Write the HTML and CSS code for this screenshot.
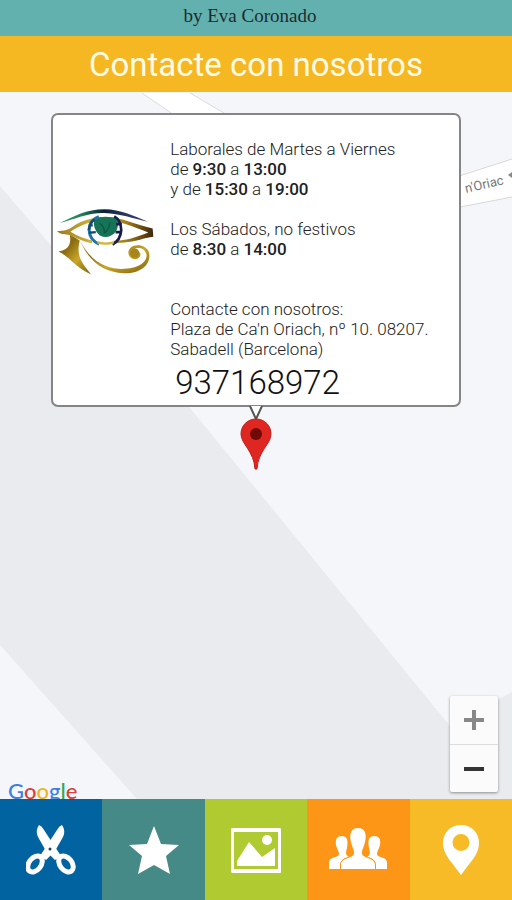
FILE: index.html
```html
<!DOCTYPE html>
<html lang="es">
<head>
<meta charset="utf-8">
<meta name="viewport" content="width=device-width, initial-scale=1">
<title>Contacte con nosotros</title>
<link rel="stylesheet" href="styles.css">
</head>
<body>
<header class="brand">by Eva Coronado</header>
<h1 class="title">Contacte con nosotros</h1>

<main class="map">
  <svg class="map-ground" viewBox="0 0 512 707" preserveAspectRatio="xMidYMid slice" aria-hidden="true">
    <rect width="512" height="707" fill="#f5f6fa"/>
    <path d="M0 94 L190 316 L450 634 L512 600 V707 H137 L0 553 Z" fill="#eaebef"/>
    <path d="M142 1 L190 34 H246 L190 1 Z" fill="#fff"/>
    <path d="M142 1 L190 34 M190 1 L246 34" stroke="#dcdce0" fill="none"/>
    <path d="M450 87 L512 67 V105 L450 117 Z" fill="#fff"/>
    <path d="M450 87 L512 67 M450 117 L512 105" stroke="#d8d8dc" fill="none"/>
    <text class="street" transform="translate(466 101) rotate(-13)">n'Oriac</text>
    <path d="M508 83 L512 80 V86 Z" fill="#888"/>
  </svg>

  <section class="place">
    <article class="card">
      <svg class="eye" viewBox="48 56 290 196" role="img" aria-label="Ojo">
        <defs>
          <linearGradient id="gold" x1="0" y1="0" x2="1" y2="1">
            <stop offset="0" stop-color="#b9951e"/><stop offset=".3" stop-color="#8a6a10"/>
            <stop offset=".6" stop-color="#c7a629"/><stop offset="1" stop-color="#80600c"/>
          </linearGradient>
          <linearGradient id="brow" x1="0" x2="1">
            <stop offset="0" stop-color="#36a060"/><stop offset=".25" stop-color="#1e805c"/>
            <stop offset=".5" stop-color="#0c2038"/><stop offset=".75" stop-color="#29365f"/><stop offset="1" stop-color="#3b437b"/>
          </linearGradient>
          <linearGradient id="lid" gradientUnits="userSpaceOnUse" x1="48" y1="0" x2="338" y2="0">
            <stop offset="0" stop-color="#9c7914"/><stop offset=".35" stop-color="#ceb13c"/>
            <stop offset=".7" stop-color="#a78219"/><stop offset="1" stop-color="#3d240d"/>
          </linearGradient>
        </defs>
        <path d="M56 98 C100 78 135 57 190 57 C239 57 275 77 321 94 C273 84 238 70 190 68 C137 67 105 86 56 98 Z" fill="url(#brow)"/>
        <path d="M48 122 C70 122 83 119 98 107 C126 88 158 80 195 80 C246 81 278 103 334 114 L336 139 C307 142 281 157 218 158 L217 151 C268 149 290 137 321 126 C275 111 238 91 196 90 C153 90 117 105 88 124 C111 137 128 144 153 150 L153 159 C125 153 110 145 86 134 C73 131 58 134 48 122 Z" fill="url(#lid)"/>
        <path d="M86 132 C91 161 84 178 52 183 C83 196 102 230 150 252 C128 222 103 202 116 150 Z" fill="url(#gold)"/>
        <path d="M116 148 C150 220 205 237 250 235 C303 232 320 207 315 190 C310 171 287 168 275 178 C268 184 272 195 281 193 C289 192 286 185 293 184 C304 191 294 207 281 206 C263 205 256 186 266 174 C280 157 317 163 323 186 C331 220 299 250 248 248 C185 245 143 213 116 148 Z" fill="url(#gold)"/>
        <circle cx="280" cy="188" r="14" fill="#a7841c"/>
        <path d="M159 84 Q193 75 228 84 Q237 124 207 137 Q193 143 176 135 Q154 119 159 84 Z" fill="#167355"/>
        <path d="M176 99 Q190 107 190 128 Q201 123 206 97" stroke="#0b5948" stroke-width="4" fill="none"/>
        <path d="M173 79 Q145 88 144 119 Q145 149 174 161" stroke="#1d75a6" stroke-width="9" fill="none"/>
        <path d="M160 86 Q145 99 143 119 M143 105 H155 M144 127 L164 125" stroke="#174977" stroke-width="7" fill="none"/>
        <path d="M219 78 Q239 89 240 119 Q238 149 214 162 M225 101 H242 M223 125 H242" stroke="#171b49" stroke-width="8" fill="none"/>
        <path d="M169 156 Q194 163 218 156" stroke="#d0b63e" stroke-width="7" fill="none"/>
      </svg>
      <div class="details">
        <p>Laborales de Martes a Viernes<br>de <b>9:30</b> a <b>13:00</b><br>y de <b>15:30</b> a <b>19:00</b></p>
        <p>Los Sábados, no festivos<br>de <b>8:30</b> a <b>14:00</b></p>
        <address>Contacte con nosotros:<br>Plaza de Ca'n Oriach, nº 10. 08207.<br>Sabadell (Barcelona)</address>
        <a class="phone" href="tel:937168972">937168972</a>
      </div>
    </article>
    <svg class="marker" viewBox="0 0 32 64" aria-hidden="true">
      <path d="M10 0 L16 13 L22 0" fill="#fff" stroke="#555" stroke-width="2"/>
      <path d="M16 13 C7 13 1 20 1 28 C1 38 14 45 15 63 H17 C18 45 31 38 31 28 C31 20 25 13 16 13 Z" fill="#e02620" stroke="#bd211c"/>
      <circle cx="16" cy="28" r="6" fill="#6f0a09"/>
    </svg>
  </section>

  <div class="zoom">
    <button type="button" aria-label="Acercar"><svg viewBox="0 0 22 22"><path d="M11 1 V21 M1 11 H21" stroke="#888" stroke-width="4"/></svg></button>
    <button type="button" aria-label="Alejar"><svg viewBox="0 0 22 22"><path d="M1 11 H21" stroke="#333" stroke-width="4"/></svg></button>
  </div>
  <div class="google"><span class="blue">G</span><span class="red">o</span><span class="yellow">o</span><span class="blue">g</span><span class="green">l</span><span class="red">e</span></div>
</main>

<nav class="tabs">
  <a class="tab services" href="#servicios" aria-label="Servicios">
    <svg viewBox="0 0 50 50">
      <path d="M13 0 Q16 1 18 5 L35 31 L29 35 L20 26 L12 12 Q9 6 13 0 Z" fill="#fff"/>
      <path d="M36 0 Q33 1 31 5 L14 31 L20 35 L29 26 L37 12 Q40 6 36 0 Z" fill="#fff"/>
      <ellipse cx="9" cy="39" rx="6" ry="9" transform="rotate(38 9 39)" fill="none" stroke="#fff" stroke-width="5"/>
      <ellipse cx="40" cy="39" rx="6" ry="9" transform="rotate(-38 40 39)" fill="none" stroke="#fff" stroke-width="5"/>
      <circle cx="24" cy="24" r="1.5" fill="#263f59"/>
    </svg>
  </a>
  <a class="tab favourites" href="#favoritos" aria-label="Favoritos">
    <svg viewBox="0 0 50 50"><path d="M25 1 L32 19 L50 20 L37 31 L41 49 L25 40 L9 49 L13 31 L0 20 L18 19 Z" fill="#fff"/></svg>
  </a>
  <a class="tab gallery" href="#galeria" aria-label="Galería">
    <svg viewBox="0 0 50 50">
      <rect x="1" y="5" width="48" height="41" rx="1" fill="none" stroke="#fff" stroke-width="4"/>
      <path d="M6 40 V36 L18 17 L31 32 L44 23 V41 H6 Z" fill="#fff"/><circle cx="36" cy="15" r="5" fill="#fff"/>
    </svg>
  </a>
  <a class="tab team" href="#equipo" aria-label="Equipo">
    <svg class="wide" viewBox="0 0 58 50">
      <g fill="#fff">
        <path d="M13 11 C8 11 6 14 7 20 C8 24 10 26 10 29 C10 33 1 31 0 37 V44 H11 C11 36 13 34 20 32 C16 30 17 27 18 23 C19 16 19 11 13 11 Z"/>
        <path d="M45 11 C50 11 52 14 51 20 C50 24 48 26 48 29 C48 33 57 31 58 37 V44 H47 C47 36 45 34 38 32 C42 30 41 27 40 23 C39 16 39 11 45 11 Z"/>
        <path d="M29 3 C22 3 20 9 22 17 C23 22 25 24 25 28 C25 34 12 32 12 40 V44 H46 V40 C46 32 33 34 33 28 C33 24 35 22 36 17 C38 9 36 3 29 3 Z" stroke="#fd9517" stroke-width="2" paint-order="stroke"/>
      </g>
    </svg>
  </a>
  <a class="tab contact" href="#contacto" aria-label="Contacto" aria-current="page">
    <svg viewBox="0 0 50 50"><path fill-rule="evenodd" d="M25 0 C14 0 7 8 7 18 C7 30 16 37 25 50 C34 37 43 30 43 18 C43 8 36 0 25 0 Z M25 9 A8 8 0 1 1 25 26 A8 8 0 1 1 25 9 Z" fill="#fff"/></svg>
  </a>
</nav>
</body>
</html>
```
FILE: styles.css
```css
* { box-sizing: border-box; }

body {
  margin: 0;
  min-height: 100vh;
  display: flex;
  flex-direction: column;
  font-family: Roboto, "Liberation Sans", sans-serif;
  color: #222;
}

.brand {
  background: #63b1ae;
  color: #1c2b30;
  font: 19px/32px "Liberation Serif", serif;
  text-align: center;
  padding: 0 28px 4px 16px;
}

.title {
  margin: 0;
  background: #f5b822;
  color: #fffbe6;
  font-size: 33px;
  font-weight: 400;
  line-height: 54px;
  padding-top: 2px;
  text-align: center;
}

.map {
  position: relative;
  flex: 1;
  overflow: hidden;
  display: flex;
  flex-direction: column;
  background: #f5f6fa;
}

.map-ground {
  position: absolute;
  inset: 0;
  width: 100%;
  height: 100%;
}

.street { font-size: 13px; fill: #777; }

.place {
  position: relative;
  width: 80%;
  margin: 21px auto 0;
  display: flex;
  flex-direction: column;
  align-items: center;
}

.card {
  width: 100%;
  display: flex;
  align-items: center;
  gap: 16px;
  padding: 24px 4px 0;
  background: #fff;
  border: 2px solid #858585;
  border-radius: 7px;
}

.eye {
  width: 97px;
  flex: none;
  margin-bottom: 60px;
}

.details {
  font-size: 17px;
  font-weight: 300;
  line-height: 20px;
}

.details p { margin: 0 0 20px; }
.details b { font-weight: 500; }
.details address { font-style: normal; margin-top: 40px; }

.phone {
  display: block;
  margin-left: 5px;
  padding-top: 2px;
  color: #111;
  font-size: 33px;
  line-height: 44px;
  text-decoration: none;
}

.marker {
  width: 32px;
  height: 64px;
  margin-top: -1px;
}

.zoom {
  position: absolute;
  right: 14px;
  bottom: 7px;
  width: 48px;
  background: #fbfbfc;
  border-radius: 2px;
  box-shadow: 0 1px 3px rgba(0, 0, 0, .4);
}

.zoom button {
  display: flex;
  align-items: center;
  justify-content: center;
  width: 100%;
  height: 48px;
  padding: 0;
  border: 0;
  background: none;
}

.zoom button + button { border-top: 1px solid #ddd; }
.zoom svg { width: 22px; height: 22px; }

.google {
  position: absolute;
  left: 8px;
  bottom: -1px;
  font: 500 22px/18px Lato, sans-serif;
}

.blue { color: #3d7de0; }
.red { color: #dc3f37; }
.yellow { color: #f0b51c; }
.green { color: #35a554; }

.tabs {
  display: grid;
  grid-template-columns: repeat(5, 1fr);
}

.tab {
  height: 101px;
  display: flex;
  align-items: center;
  justify-content: center;
}

.tab svg { width: 50px; height: 50px; }
.tab .wide { width: 58px; }

.services { background: #0263a1; }
.favourites { background: #458a86; }
.gallery { background: #afcb31; }
.team { background: #fd9517; }
.contact { background: #f8bb28; }
```
